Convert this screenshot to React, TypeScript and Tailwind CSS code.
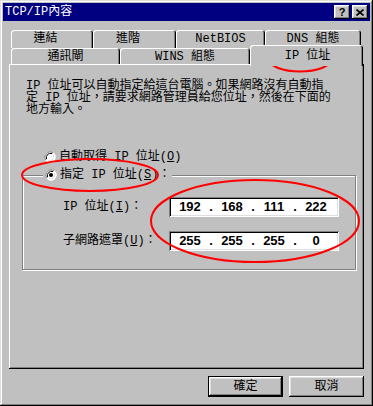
import React from "react";

const ui = "font-['Liberation_Mono','Noto_Sans_CJK_TC',monospace] text-[12px] text-black";
const raised =
  "shadow-[inset_-1px_-1px_#000,inset_1px_1px_#fff,inset_-2px_-2px_#808080,inset_2px_2px_#dfdfdf]";
const tabEdge = "shadow-[inset_1px_1px_#fff,inset_-1px_0_#000,inset_-2px_0_#808080]";

function Radio({ checked = false }: { checked?: boolean }) {
  return (
    <svg width="12" height="12" viewBox="0 0 12 12" className="shrink-0">
      <circle cx="6" cy="6" r="5.5" fill="#fff" />
      <path d="M1.5 9 A5.5 5.5 0 0 1 9 1.5" stroke="#808080" strokeWidth="1" fill="none" />
      <path d="M2.6 8.2 A4.3 4.3 0 0 1 8.2 2.6" stroke="#000" strokeWidth="1" fill="none" />
      <path d="M10.5 3 A5.5 5.5 0 0 1 3 10.5" stroke="#fff" strokeWidth="1" fill="none" />
      <path d="M9.4 3.8 A4.3 4.3 0 0 1 3.8 9.4" stroke="#dfdfdf" strokeWidth="1" fill="none" />
      {checked && <circle cx="6" cy="6" r="2" fill="#000" />}
    </svg>
  );
}

function Tab({ label, w, h, className = "" }: { label: string; w: string; h: string; className?: string }) {
  return (
    <div className={`${w} ${h} ${tabEdge} rounded-t-[3px] bg-[#c0c0c0] flex items-center justify-center ${className}`}>
      {label}
    </div>
  );
}

function IpField({ parts }: { parts: string[] }) {
  return (
    <div className="w-[170px] h-[20px] bg-white shadow-[inset_1px_1px_#808080,inset_-1px_-1px_#fff,inset_2px_2px_#000,inset_-2px_-2px_#dfdfdf] flex items-center pl-[5px] font-['Liberation_Sans',sans-serif] text-[13px] font-bold">
      {parts.map((p, i) => (
        <React.Fragment key={i}>
          {i > 0 && <span className="w-[10px] text-center">.</span>}
          <span className="w-[32px] text-center">{p}</span>
        </React.Fragment>
      ))}
    </div>
  );
}

export default function App() {
  return (
    <div
      className={`relative w-[373px] h-[406px] bg-[#c0c0c0] p-[3px] shadow-[inset_-1px_-1px_#000,inset_1px_1px_#dfdfdf,inset_-2px_-2px_#808080,inset_2px_2px_#fff] ${ui}`}
    >
      {/* title bar */}
      <div className="h-[18px] bg-[#000080] flex items-center justify-between pl-[2px] pr-[2px]">
        <span className="text-white leading-[12px]">TCP/IP內容</span>
        <div className="flex gap-[2px]">
          <div className={`w-[16px] h-[14px] bg-[#c0c0c0] ${raised} flex items-center justify-center font-['Liberation_Sans',sans-serif] text-[11px] font-bold leading-none`}>
            ?
          </div>
          <div className={`w-[16px] h-[14px] bg-[#c0c0c0] ${raised} flex items-center justify-center`}>
            <svg width="8" height="7" viewBox="0 0 8 7">
              <path d="M0.5 0.5 L7.5 6.5 M7.5 0.5 L0.5 6.5" stroke="#000" strokeWidth="1.6" />
            </svg>
          </div>
        </div>
      </div>

      {/* tabs */}
      <div className="mt-[9px] ml-[8px] flex">
        <Tab label="連結" w="w-[82px]" h="h-[18px]" className="pr-[13px] pb-[1px]" />
        <Tab label="進階" w="w-[83px]" h="h-[18px]" className="pr-[13px] pb-[1px]" />
        <Tab label="NetBIOS" w="w-[89px]" h="h-[18px]" className="pb-[1px]" />
        <Tab label="DNS 組態" w="w-[96px]" h="h-[18px]" className="pb-[1px]" />
      </div>
      <div className="relative -mt-[3px] ml-[8px] flex items-end">
        <Tab label="通訊閘" w="w-[109px]" h="h-[16px]" className="pt-[2px]" />
        <Tab label="WINS 組態" w="w-[130px]" h="h-[16px]" className="pt-[2px]" />
        <Tab label="IP 位址" w="w-[113px]" h="h-[21px]" className="relative z-10 -mb-[2px] pt-[1px] pl-[2px]" />
      </div>

      {/* panel */}
      <div className="ml-[6px] w-[355px] h-[305px] shadow-[inset_-1px_-1px_#000,inset_1px_1px_#fff,inset_-2px_-2px_#808080] pt-[16px]">
        <p className="pl-[17px] leading-[12px] whitespace-nowrap">
          IP 位址可以自動指定給這台電腦。如果網路沒有自動指
          <br />
          定 IP 位址，請要求網路管理員給您位址，然後在下面的
          <br />
          地方輸入。
        </p>

        <div className="mt-[35px] ml-[35px] h-[12px] flex items-center gap-[3px]">
          <Radio />
          <span>
            自動取得 IP 位址(<u>O</u>)
          </span>
        </div>

        <fieldset className="mt-[6px] ml-[13px] w-[334px] h-[101px] border border-[#808080] shadow-[1px_1px_0_#fff,inset_1px_1px_0_#fff]">
          <legend className="ml-[20px] px-[2px] bg-[#c0c0c0]">
            <span className="flex items-center gap-[3px] h-[12px]">
              <Radio checked />
              <span>
                指定 IP 位址(<u>S</u>)：
              </span>
            </span>
          </legend>
          <div className="mt-[16px] pl-[40px] flex items-center">
            <span className="w-[106px]">
              IP 位址(<u>I</u>)：
            </span>
            <IpField parts={["192", "168", "111", "222"]} />
          </div>
          <div className="mt-[14px] pl-[40px] flex items-center">
            <span className="w-[106px]">
              子網路遮罩(<u>U</u>)：
            </span>
            <IpField parts={["255", "255", "255", "0"]} />
          </div>
        </fieldset>
      </div>

      {/* buttons */}
      <div className="mt-[7px] pr-[6px] flex justify-end gap-[6px]">
        <button className={`w-[75px] h-[21px] bg-[#c0c0c0] border border-black ${raised} flex items-center justify-center`}>
          確定
        </button>
        <button className={`w-[75px] h-[21px] bg-[#c0c0c0] ${raised} flex items-center justify-center`}>
          取消
        </button>
      </div>

      {/* red annotations */}
      <svg className="absolute inset-0 pointer-events-none" width="373" height="406" viewBox="0 0 373 406">
        <g fill="none" stroke="#f00" strokeWidth="2">
          <ellipse cx="300" cy="59.5" rx="31" ry="12" />
          <ellipse cx="90" cy="175" rx="68" ry="16" />
          <ellipse cx="255" cy="221" rx="104" ry="41" />
        </g>
      </svg>
    </div>
  );
}
